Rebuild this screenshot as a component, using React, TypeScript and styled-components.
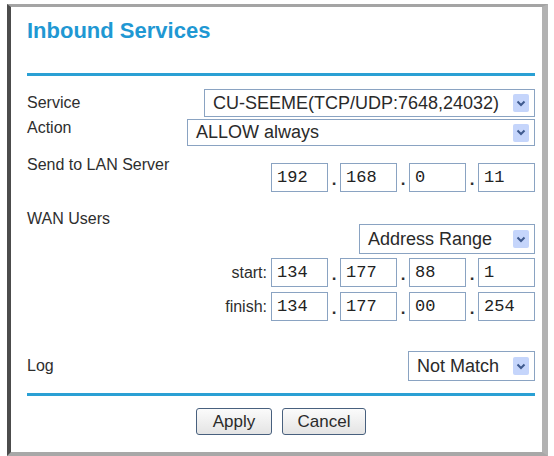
import * as React from "react";
import styled, { createGlobalStyle } from "styled-components";

const GlobalStyle = createGlobalStyle`
  html, body {
    margin: 0;
    padding: 0;
    background: #ffffff;
  }
  body {
    font-family: "Liberation Sans", Arial, sans-serif;
    color: #2e2e2e;
  }
`;

const SFrame = styled.div`
  box-sizing: border-box;
  margin: 4px 0 0 7px;
  width: 541px;
  height: 452px;
  border-top: 3px solid #a4a4a4;
  border-left: 4px solid #4c4c4c;
  border-right: 6px solid #b2b2b2;
  border-bottom: 4px solid #a8a8a8;
  padding: 0 7px 0 16px;
  display: flex;
  flex-direction: column;
  overflow: hidden;
  & > * {
    flex-shrink: 0;
  }
`;

const STitle = styled.h1`
  margin: 11px 0 0 0;
  font-size: 22px;
  line-height: 26px;
  font-weight: bold;
  color: #1f98d3;
`;

const SRule = styled.div<{ $top: number }>`
  margin-top: ${({ $top }) => $top}px;
  height: 3px;
  background: #2aa0d4;
`;

const SRow = styled.div<{ $top: number }>`
  margin-top: ${({ $top }) => $top}px;
  display: flex;
  justify-content: space-between;
  align-items: center;
`;

/* labels in some rows sit higher than their control: $dy pins them to the row top */
const SLabel = styled.div<{ $dy?: number }>`
  font-size: 16px;
  line-height: 18px;
  ${({ $dy }) =>
    $dy === undefined ? "" : `align-self: flex-start; margin-top: ${$dy}px;`}
`;

const SSelect = styled.div<{ $width: number; $height: number }>`
  box-sizing: border-box;
  width: ${({ $width }) => $width}px;
  height: ${({ $height }) => $height}px;
  border: 1px solid #8aa3c2;
  background: #fff;
  display: flex;
  align-items: center;
  justify-content: space-between;
  padding: 0 5px 0 8px;
  font-size: 18px;
  color: #2a2a2a;
  white-space: nowrap;
`;

const SArrow = styled.div`
  width: 16px;
  height: 18px;
  background: #c5d5fb;
  border-radius: 2px;
  display: flex;
  align-items: center;
  justify-content: center;
  flex-shrink: 0;
`;

const SIpGroup = styled.div`
  display: flex;
  align-items: center;
  height: 29px;
`;

const SIpBox = styled.div`
  box-sizing: border-box;
  width: 57px;
  height: 29px;
  border: 1px solid #8aa3c2;
  padding-left: 5px;
  display: flex;
  align-items: center;
  font-family: "Liberation Mono", "Courier New", monospace;
  font-size: 17px;
  color: #222;
`;

const SDot = styled.span`
  width: 12px;
  height: 29px;
  text-align: center;
  font-size: 17px;
  font-weight: bold;
  line-height: 34px;
  overflow: hidden;
`;

const SRangeRow = styled.div<{ $top: number }>`
  margin-top: ${({ $top }) => $top}px;
  display: flex;
  justify-content: flex-end;
  align-items: center;
  gap: 4px;
`;

const SRangeLabel = styled.div`
  font-size: 16px;
`;

const SButtons = styled.div<{ $top: number }>`
  margin-top: ${({ $top }) => $top}px;
  display: flex;
  justify-content: center;
  gap: 10px;
`;

const SButton = styled.button<{ $width: number }>`
  box-sizing: border-box;
  width: ${({ $width }) => $width}px;
  height: 27px;
  border: 1px solid #48607e;
  border-radius: 3px;
  background: linear-gradient(#fbfbfb, #e4e4e4);
  font-family: "Liberation Sans", Arial, sans-serif;
  font-size: 17px;
  color: #2a2a2a;
  padding: 0;
`;

function Chevron() {
  return (
    <svg width="10" height="7" viewBox="0 0 10 7">
      <polyline
        points="1.5,1.5 5,5 8.5,1.5"
        fill="none"
        stroke="#3f5a8e"
        strokeWidth="2"
      />
    </svg>
  );
}

function Select(props: { value: string; width: number; height: number }) {
  return (
    <SSelect $width={props.width} $height={props.height}>
      <span>{props.value}</span>
      <SArrow>
        <Chevron />
      </SArrow>
    </SSelect>
  );
}

function IpFields(props: { parts: string[] }) {
  return (
    <SIpGroup>
      {props.parts.map((p, i) => (
        <React.Fragment key={i}>
          {i > 0 && <SDot>.</SDot>}
          <SIpBox>{p}</SIpBox>
        </React.Fragment>
      ))}
    </SIpGroup>
  );
}

export default function App() {
  return (
    <>
      <GlobalStyle />
      <SFrame>
        <STitle>Inbound Services</STitle>
        <SRule $top={29} />

        <SRow $top={13}>
          <SLabel>Service</SLabel>
          <Select value="CU-SEEME(TCP/UDP:7648,24032)" width={331} height={28} />
        </SRow>

        <SRow $top={2}>
          <SLabel $dy={0}>Action</SLabel>
          <Select value="ALLOW always" width={348} height={27} />
        </SRow>

        <SRow $top={17}>
          <SLabel $dy={-7}>Send to LAN Server</SLabel>
          <IpFields parts={["192", "168", "0", "11"]} />
        </SRow>

        <SRow $top={32}>
          <SLabel $dy={-14}>WAN Users</SLabel>
          <Select value="Address Range" width={176} height={30} />
        </SRow>

        <SRangeRow $top={4}>
          <SRangeLabel>start:</SRangeLabel>
          <IpFields parts={["134", "177", "88", "1"]} />
        </SRangeRow>

        <SRangeRow $top={5}>
          <SRangeLabel>finish:</SRangeLabel>
          <IpFields parts={["134", "177", "00", "254"]} />
        </SRangeRow>

        <SRow $top={30}>
          <SLabel>Log</SLabel>
          <Select value="Not Match" width={127} height={30} />
        </SRow>

        <SRule $top={12} />

        <SButtons $top={12}>
          <SButton $width={76}>Apply</SButton>
          <SButton $width={84}>Cancel</SButton>
        </SButtons>
      </SFrame>
    </>
  );
}
